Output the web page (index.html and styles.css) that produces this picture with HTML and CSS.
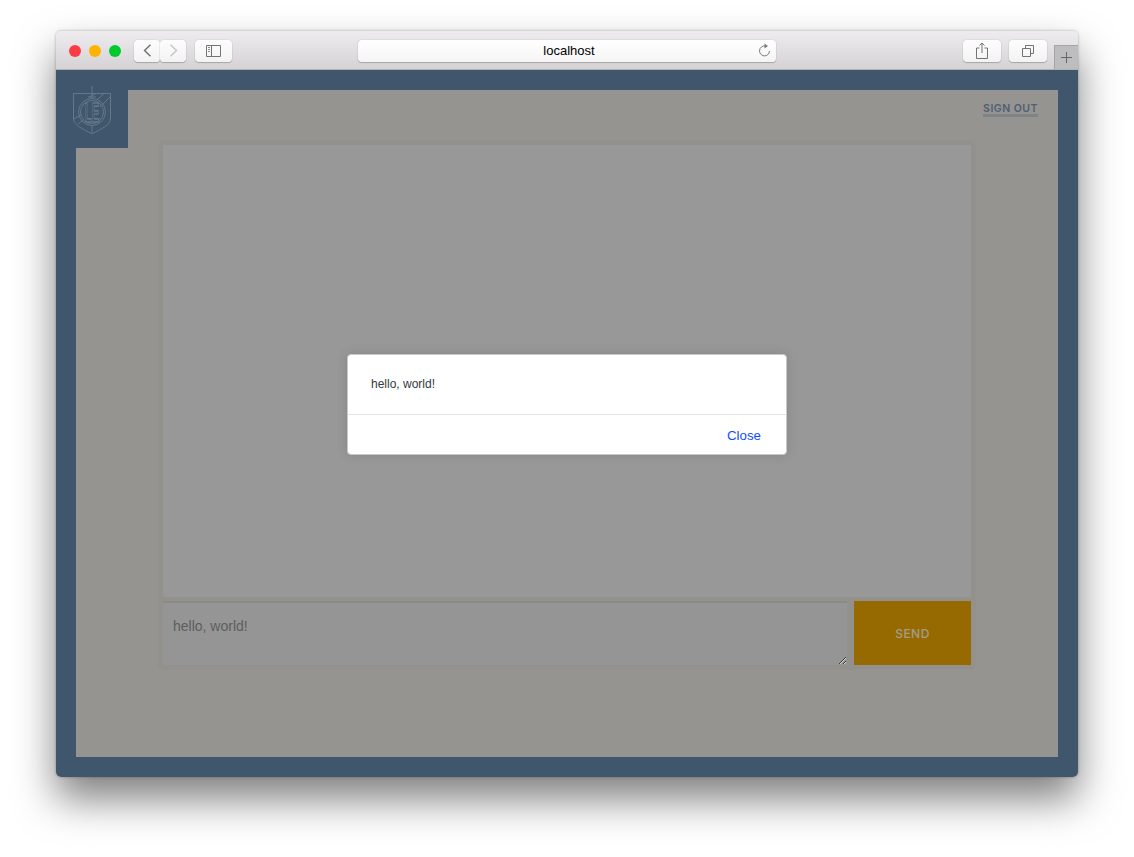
FILE: index.html
```html
<!DOCTYPE html>
<html>
	<head>
		<title>localhost</title>
		<link rel="stylesheet" href="styles.css">
	</head>
	<body>
		<div class="Window">
			<div class="Toolbar">
				<div class="Lights">
					<span class="Light LightRed"></span>
					<span class="Light LightYellow"></span>
					<span class="Light LightGreen"></span>
				</div>
				<div class="NavButtons">
					<div class="ToolButton NavButton">
						<svg width="9" height="13" viewBox="0 0 9 13"><path d="M7.5 .8 L1.5 6.5 L7.5 12.2" fill="none" stroke="#6f6f6f" stroke-width="1.4"/></svg>
					</div>
					<div class="ToolButton NavButton">
						<svg width="9" height="13" viewBox="0 0 9 13"><path d="M1.5 .8 L7.5 6.5 L1.5 12.2" fill="none" stroke="#c4c4c4" stroke-width="1.4"/></svg>
					</div>
				</div>
				<div class="ToolButton SidebarButton">
					<svg width="15" height="12" viewBox="0 0 15 12"><path d="M.5 .5 H14.5 V11.5 H.5 Z M5.5 .5 V11.5" fill="none" stroke="#737373"/><path d="M2 2.5 H4 M2 4.5 H4 M2 6.5 H4" stroke="#8a8a8a"/></svg>
				</div>
				<div class="AddressBar">
					<span>localhost</span>
					<svg class="Reload" width="13" height="15" viewBox="0 0 13 15"><path d="M7.5 3 A5 5 0 1 0 11.5 8" fill="none" stroke="#7b7b7b" stroke-width="1"/><path d="M6.5 .5 L10 3 L6.5 5.5 Z" fill="#7b7b7b"/></svg>
				</div>
				<div class="ToolButton RightButton">
					<svg width="12" height="17" viewBox="0 0 12 17"><path d="M3.5 6 H.5 V16.5 H11.5 V6 H8.5 M6 11 V1 M3.5 3.5 L6 1 L8.5 3.5" fill="none" stroke="#737373"/></svg>
				</div>
				<div class="ToolButton RightButton TabsButton">
					<svg width="12" height="12" viewBox="0 0 12 12"><path d="M.5 3.5 H8.5 V11.5 H.5 Z M3.5 3.5 V.5 H11.5 V8.5 H8.5" fill="none" stroke="#737373"/></svg>
				</div>
				<div class="NewTab">
					<svg width="11" height="11" viewBox="0 0 11 11"><path d="M5.5 0 V11 M0 5.5 H11" stroke="#666666"/></svg>
				</div>
			</div>
			<div class="Content">
				<div class="Panel">
					<div class="LogoCorner">
						<svg width="40" height="50" viewBox="0 0 40 50">
							<g fill="none" stroke="#6f8092" stroke-width="0.8">
								<path d="M.5 7.5 H37.5 V32 C37.5 40 27 43 19 48 C11 43 .5 40 .5 32 Z"/>
								<circle cx="19" cy="26" r="13.5"/>
								<circle cx="19" cy="26" r="11.5"/>
								<path d="M19 0 V12 M19 40 V47 M15 11 H23 M16 11 L22 8 M37 11 L27 21 M31 7.5 L24 14 M.5 33 L8 29 M5 38 L10 34"/>
							</g>
							<text class="LogoText" transform="translate(19 36) scale(.42 1)" text-anchor="middle">LE</text>
						</svg>
					</div>
					<div class="TopBar">
						<a class="SignOut">SIGN OUT</a>
					</div>
					<div class="Chat">
						<div class="Messages"></div>
						<div class="Composer">
							<textarea class="ChatInput">hello, world!</textarea>
							<div class="SendButton">SEND</div>
						</div>
					</div>
				</div>
				<div class="Modal">
					<div class="ModalBody">hello, world!</div>
					<div class="ModalFooter"><a class="ModalClose">Close</a></div>
				</div>
			</div>
		</div>
	</body>
</html>
```

FILE: styles.css
```css
/**************************************************************************/
/*
/* Browser window
/*
/**************************************************************************/

html, body {
	margin: 0;
	height: 857px;
	overflow: hidden;
	background-color: #ffffff;
}

body {
	padding: 31px 56px 0 56px;
	box-sizing: border-box;
}

.Window {
	width: 1022px;
	height: 746px;
	display: flex;
	flex-direction: column;
	border-radius: 5px;
	overflow: hidden;
	box-shadow: 0 22px 40px rgba(0,0,0,0.5), 0 0 3px rgba(0,0,0,0.3);
}

.Toolbar {
	height: 39px;
	box-sizing: border-box;
	display: flex;
	align-items: center;
	position: relative;
	padding: 1px 0 0 13px;
	background: linear-gradient(#eeecee, #d4d2d5);
	border-bottom: 1px solid #b3b2b3;
}

.Lights {
	display: flex;
	gap: 8px;
	margin-right: 13px;
}

.Light {
	width: 12px;
	height: 12px;
	border-radius: 50%;
}

.LightRed { background-color: #fc3c44; }
.LightYellow { background-color: #fdb300; }
.LightGreen { background-color: #00ca2c; }

.ToolButton {
	height: 22px;
	display: flex;
	align-items: center;
	justify-content: center;
	box-sizing: border-box;
	background: linear-gradient(#fdfdfd, #f3f3f3);
	border-radius: 4px;
	box-shadow: 0 0 1px rgba(0,0,0,0.35), 0 1px 1px rgba(0,0,0,0.2);
}

.NavButtons {
	display: flex;
	margin-right: 9px;
}

.NavButton {
	width: 26px;
}

.SidebarButton {
	width: 37px;
}

.AddressBar {
	width: 418px;
	height: 22px;
	margin: 0 187px 0 126px;
	padding-left: 4px;
	box-sizing: border-box;
	position: relative;
	display: flex;
	align-items: center;
	justify-content: center;
	background: linear-gradient(#ffffff, #f5f5f5);
	border-radius: 4px;
	box-shadow: 0 0 1px rgba(0,0,0,0.35), 0 1px 1px rgba(0,0,0,0.2);
	font: 13px "Liberation Sans", sans-serif;
	color: #000000;
}

.Reload {
	position: absolute;
	right: 5px;
	top: 3px;
}

.RightButton {
	width: 38px;
}

.TabsButton {
	margin-left: 8px;
}

.NewTab {
	position: absolute;
	right: 0;
	top: 14px;
	width: 24px;
	height: 24px;
	display: flex;
	align-items: center;
	justify-content: center;
	background-color: #bdbcbe;
	border-left: 1px solid #a5a4a6;
	border-top: 1px solid #a5a4a6;
	box-sizing: border-box;
}

/**************************************************************************/
/*
/* Page under the dialog
/*
/**************************************************************************/

.Content {
	flex: 1;
	position: relative;
	padding: 20px;
	background-color: #40566c;
}

.Panel {
	height: 667px;
	position: relative;
	background-color: #969490;
}

.LogoCorner {
	position: absolute;
	left: -4px;
	top: -4px;
	width: 56px;
	height: 62px;
	background-color: #40566c;
	box-sizing: border-box;
	padding: 0 0 0 1px;
}

.LogoText {
	font: bold 27px "Liberation Sans", sans-serif;
	fill: none;
	stroke: #6f8092;
	stroke-width: 0.8;
	vector-effect: non-scaling-stroke;
}

.TopBar {
	height: 52px;
	display: flex;
	justify-content: flex-end;
	align-items: flex-start;
	padding-right: 20px;
}

.SignOut {
	margin-top: 14px;
	font: 600 10.5px/10px Inter, sans-serif;
	letter-spacing: 0.5px;
	color: #4d6073;
	border-bottom: 3px solid #7c8488;
}

.Chat {
	width: 808px;
	margin: 0 auto;
	padding: 3px;
	background-color: #92918c;
	box-shadow: 0 0 3px rgba(0,0,0,0.05);
}

.Messages {
	height: 452px;
	background-color: #989898;
}

.Composer {
	display: flex;
	gap: 7px;
	margin-top: 4px;
}

.ChatInput {
	flex: 1;
	height: 64px;
	margin: 0;
	display: block;
	box-sizing: border-box;
	padding: 15px 10px;
	border: 0;
	border-top: 2px solid #8a8a88;
	outline: none;
	background-color: #959595;
	font: 14px "Liberation Sans", sans-serif;
	color: #5d5d5d;
}

.SendButton {
	width: 117px;
	height: 64px;
	padding-top: 1px;
	box-sizing: border-box;
	display: flex;
	align-items: center;
	justify-content: center;
	background-color: #966a00;
	font: 500 12px Inter, sans-serif;
	letter-spacing: 0.5px;
	color: #a59c8a;
}

/**************************************************************************/
/*
/* Dialog
/*
/**************************************************************************/

.Modal {
	position: absolute;
	left: 291px;
	top: 284px;
	width: 440px;
	height: 101px;
	box-sizing: border-box;
	background-color: #ffffff;
	border: 1px solid #c9c9c9;
	border-radius: 4px;
	box-shadow: 0 0 12px rgba(0,0,0,0.12);
	font-family: "Liberation Sans", sans-serif;
}

.ModalBody {
	height: 60px;
	box-sizing: border-box;
	padding: 22px 23px 0 23px;
	font-size: 12px;
	color: #333a42;
	border-bottom: 1px solid #e2e2e2;
}

.ModalFooter {
	display: flex;
	justify-content: flex-end;
	padding: 13px 25px 0 0;
}

.ModalClose {
	font-size: 13.3px;
	color: #0d4cff;
}
```
